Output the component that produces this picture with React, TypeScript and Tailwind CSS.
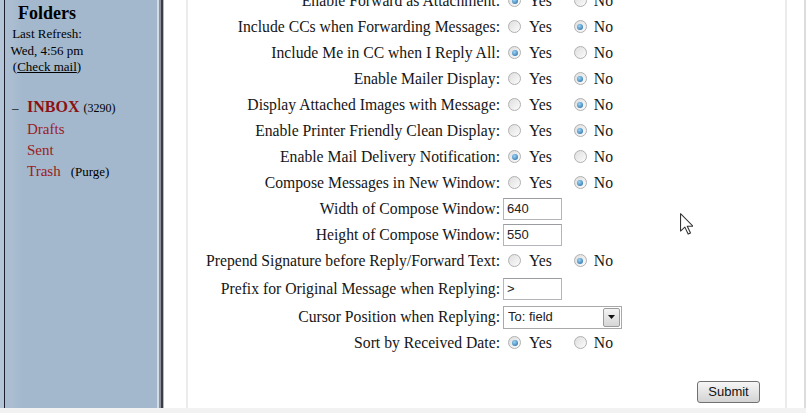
import React from "react";

type RowDef =
  | { label: string; kind: "radio"; yes: boolean; h?: string }
  | { label: string; kind: "input"; value: string; h?: string }
  | { label: string; kind: "select"; value: string; h?: string };

const rows: RowDef[] = [
  { label: "Enable Forward as Attachment:", kind: "radio", yes: true },
  { label: "Include CCs when Forwarding Messages:", kind: "radio", yes: false },
  { label: "Include Me in CC when I Reply All:", kind: "radio", yes: true },
  { label: "Enable Mailer Display:", kind: "radio", yes: false },
  { label: "Display Attached Images with Message:", kind: "radio", yes: false },
  { label: "Enable Printer Friendly Clean Display:", kind: "radio", yes: false },
  { label: "Enable Mail Delivery Notification:", kind: "radio", yes: true },
  { label: "Compose Messages in New Window:", kind: "radio", yes: false },
  { label: "Width of Compose Window:", kind: "input", value: "640" },
  { label: "Height of Compose Window:", kind: "input", value: "550" },
  { label: "Prepend Signature before Reply/Forward Text:", kind: "radio", yes: false },
  { label: "Prefix for Original Message when Replying:", kind: "input", value: ">", h: "h-[30px]" },
  { label: "Cursor Position when Replying:", kind: "select", value: "To: field" },
  { label: "Sort by Received Date:", kind: "radio", yes: true },
];

function Radio({ checked }: { checked: boolean }) {
  return (
    <span className="flex h-[13px] w-[13px] items-center justify-center rounded-full border border-[#b0b0b0] bg-linear-to-br from-[#dedede] to-[#fcfcfc]">
      {checked && (
        <span className="h-[6px] w-[6px] rounded-full bg-[radial-gradient(circle_at_40%_35%,#9bd6f7,#1e62a0)]" />
      )}
    </span>
  );
}

function Row({ row }: { row: RowDef }) {
  return (
    <div className={`flex items-center ${row.h ?? "h-[26px]"}`}>
      <div className="w-[312px] shrink-0 text-right text-[15.7px] text-[#161616]">{row.label}</div>
      {row.kind === "radio" && (
        <div className="flex items-center pl-[8px] text-[15.7px] text-[#161616]">
          <Radio checked={row.yes} />
          <span className="ml-[8px]">Yes</span>
          <span className="ml-[22px]">
            <Radio checked={!row.yes} />
          </span>
          <span className="ml-[7px]">No</span>
        </div>
      )}
      {row.kind === "input" && (
        <div className="pl-[3px]">
          <div className="flex h-[22px] w-[59px] items-center border border-[#b3b5bb] border-t-[#9a9ca2] bg-white pl-[3px] font-['Liberation_Sans',sans-serif] text-[13px] text-[#222]">
            {row.value}
          </div>
        </div>
      )}
      {row.kind === "select" && (
        <div className="pl-[3px]">
          <div className="flex h-[23px] w-[119px] items-center border border-[#a9a9a9] bg-white">
            <span className="flex-1 pl-[4px] font-['Liberation_Sans',sans-serif] text-[13px] text-[#222]">{row.value}</span>
            <span className="mr-[1px] flex h-[19px] w-[17px] items-center justify-center rounded-[2px] border border-[#9c9c9c] bg-linear-to-b from-[#f4f4f4] to-[#d6d6d6]">
              <svg width="7" height="4" viewBox="0 0 7 4">
                <path d="M0 0h7L3.5 4z" fill="#111" />
              </svg>
            </span>
          </div>
        </div>
      )}
    </div>
  );
}

export default function App() {
  return (
    <div className="relative h-[413px] w-[806px] overflow-hidden bg-white font-['Liberation_Serif',serif] text-black">
      <div className="flex h-[408px]">
        <div className="w-[4px] bg-[#b4c5d7]" />
        <div className="w-[1px] bg-[#1c1f2b]" />

        {/* Folders sidebar */}
        <aside className="w-[152px] bg-linear-to-r from-[#aabdd1] from-[5%] to-[#a3b8cd] to-[12%] pt-[3px]">
          <div className="w-[84px] text-center">
            <div className="text-[18px] font-bold leading-[20px]">Folders</div>
            <div className="mt-[2px] text-[13px] leading-[17px]">Last Refresh:</div>
            <div className="text-[13px] leading-[17px]">Wed, 4:56 pm</div>
            <div className="text-[13px] leading-[16px]">
              (<span className="underline">Check mail</span>)
            </div>
          </div>
          <div className="mt-[21px]">
            <div className="flex items-baseline pl-[7px] leading-[21px]">
              <span className="w-[15px] text-[13px]">–</span>
              <span className="text-[16px] font-bold text-[#8c1111]">INBOX</span>
              <span className="ml-[4px] text-[12px]">(3290)</span>
            </div>
            <div className="pl-[22px] text-[15px] leading-[21px] text-[#9b1c1c]">Drafts</div>
            <div className="pl-[22px] text-[15px] leading-[21px] text-[#9b1c1c]">Sent</div>
            <div className="flex items-baseline pl-[22px] leading-[21px]">
              <span className="text-[15px] text-[#9b1c1c]">Trash</span>
              <span className="ml-[10px] text-[13px]">(Purge)</span>
            </div>
          </div>
        </aside>

        <div className="w-[2px] bg-[#d3dbe5]" />
        <div className="w-[2px] bg-[#8b909a]" />
        <div className="w-[2px] bg-[#3b3e46]" />
        <div className="w-[1px] bg-[#b6bac2]" />
        <div className="w-[22px] bg-white" />
        <div className="w-[2px] bg-[#ececec]" />

        {/* Options table */}
        <main className="flex w-[597px] flex-col">
          <div className="-mt-[12px]">
            {rows.map((r) => (
              <Row key={r.label} row={r} />
            ))}
          </div>
          <div className="mt-[25px] flex justify-end pr-[25px]">
            <button className="h-[22px] w-[63px] rounded-[3px] border border-[#707070] bg-linear-to-b from-[#f6f6f6] to-[#d3d3d3] font-['Liberation_Sans',sans-serif] text-[13px] text-[#111]">
              Submit
            </button>
          </div>
        </main>

        <div className="w-[2px] bg-[#ececec]" />
        <div className="w-[17px] bg-white" />
        <div className="w-[2px] bg-[#dcdcdc]" />
      </div>
      <div className="h-[5px] bg-[#f2f2f2]" />

      {/* mouse pointer */}
      <svg className="absolute left-[680px] top-[213px]" width="13" height="22" viewBox="0 0 12 20">
        <path d="M0.5 0.5v16l4-3.6 3 6.4 2.2-1-3-6.3h5.3z" fill="#fff" stroke="#333" strokeWidth="1" strokeLinejoin="round" />
      </svg>
    </div>
  );
}
